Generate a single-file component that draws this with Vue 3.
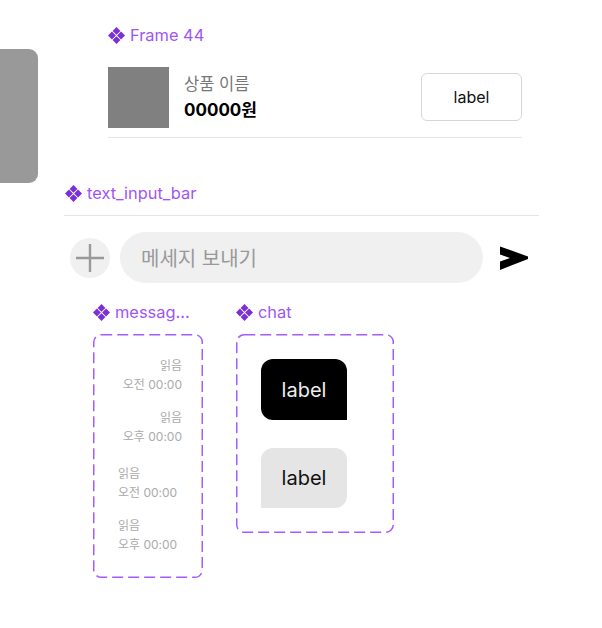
<script setup>
const times = [
  { read: '읽음', time: '오전 00:00', mine: true },
  { read: '읽음', time: '오후 00:00', mine: true },
  { read: '읽음', time: '오전 00:00', mine: false },
  { read: '읽음', time: '오후 00:00', mine: false }
]
const diamonds = ['M7 .5 10 3.5 7 6.5 4 3.5Z', 'M3.5 4 6.5 7 3.5 10 .5 7Z', 'M10.5 4 13.5 7 10.5 10 7.5 7Z', 'M7 7.5 10 10.5 7 13.5 4 10.5Z']
</script>

<template>
  <div class="page">
    <div class="side-tab"></div>

    <section class="frame44">
      <h3 class="comp-title">
        <svg class="comp-icon" viewBox=".5 .5 13 13"><path v-for="d in diamonds" :key="d" :d="d" /></svg>
        Frame 44
      </h3>
      <div class="product">
        <div class="thumb"></div>
        <div class="product-info">
          <span class="product-name">상품 이름</span>
          <strong class="product-price">00000원</strong>
        </div>
        <button class="outline-btn">label</button>
      </div>
    </section>

    <section class="input-section">
      <h3 class="comp-title">
        <svg class="comp-icon" viewBox=".5 .5 13 13"><path v-for="d in diamonds" :key="d" :d="d" /></svg>
        text_input_bar
      </h3>
      <div class="input-bar">
        <button class="plus-btn">
          <svg width="30" height="30" viewBox="0 0 30 30"><path d="M15 1V29M1 15H29" stroke="#999" stroke-width="2.4" fill="none" /></svg>
        </button>
        <div class="pill">메세지 보내기</div>
        <svg class="send" width="30" height="24" viewBox="0 0 30 24"><path d="M1 .5 29 10.5V13L1 24V15.5L11 12 1 8.5Z" fill="#000" /></svg>
      </div>
    </section>

    <section class="variants">
      <div class="variant">
        <h3 class="comp-title">
          <svg class="comp-icon" viewBox=".5 .5 13 13"><path v-for="d in diamonds" :key="d" :d="d" /></svg>
          messag...
        </h3>
        <div class="dash-box times">
          <svg class="dash" width="110" height="244"><rect x=".75" y=".75" width="108.5" height="242.5" rx="7.5" /></svg>
          <div v-for="(t, i) in times" :key="i" class="stamp" :class="{ mine: t.mine }">
            <span>{{ t.read }}</span>
            <span>{{ t.time }}</span>
          </div>
        </div>
      </div>

      <div class="variant">
        <h3 class="comp-title">
          <svg class="comp-icon" viewBox=".5 .5 13 13"><path v-for="d in diamonds" :key="d" :d="d" /></svg>
          chat
        </h3>
        <div class="dash-box chats">
          <svg class="dash" width="158" height="199"><rect x=".75" y=".75" width="156.5" height="197.5" rx="7.5" /></svg>
          <div class="bubble dark">label</div>
          <div class="bubble light">label</div>
        </div>
      </div>
    </section>
  </div>
</template>

<style>
html, body {
  background: #fff;
}
</style>

<style scoped>
.page {
  position: relative;
  width: 602px;
  height: 628px;
  overflow: hidden;
  padding-top: 26px;
  box-sizing: border-box;
  font-family: Inter, "Noto Sans CJK KR", sans-serif;
}
.side-tab {
  position: absolute;
  left: -20px;
  top: 49px;
  width: 58px;
  height: 134px;
  border-radius: 9px;
  background: #999;
}
.comp-title {
  display: flex;
  align-items: center;
  gap: 5px;
  margin: 0;
  height: 19px;
  box-sizing: border-box;
  font-size: 16.4px;
  line-height: 17px;
  font-weight: 400;
  color: #9f55f5;
  white-space: nowrap;
}
.comp-icon {
  width: 17px;
  height: 17px;
  fill: #7b2fd6;
  flex: none;
}
.frame44 {
  width: 414px;
  margin-left: 108px;
}
.product {
  display: flex;
  align-items: center;
  height: 61px;
  margin-top: 22px;
  padding-bottom: 9px;
  border-bottom: 1px solid #e5e5e5;
}
.thumb {
  width: 61px;
  height: 61px;
  background: #808080;
}
.product-info {
  display: flex;
  flex-direction: column;
  gap: 4px;
  margin-left: 15px;
}
.product-name {
  font-size: 16.5px;
  line-height: 20px;
  color: #777;
}
.product-price {
  font-size: 17px;
  line-height: 24px;
  font-weight: 700;
  color: #000;
}
.outline-btn {
  align-self: flex-start;
  width: 101px;
  height: 48px;
  margin: 6px 0 0 auto;
  border: 1.5px solid #d6d6d6;
  border-radius: 6px;
  background: #fff;
  font: 400 16px Inter, sans-serif;
  color: #111;
}
.input-section {
  width: 475px;
  margin: 46px 0 0 64px;
}
.input-section .comp-title {
  margin-left: 1px;
}
.input-bar {
  display: flex;
  align-items: center;
  height: 51px;
  padding: 16px 10px 0 6px;
  margin-top: 12px;
  border-top: 1px solid #e5e5e5;
}
.plus-btn {
  display: flex;
  align-items: center;
  justify-content: center;
  width: 40px;
  height: 40px;
  padding: 0;
  border: 0;
  border-radius: 50%;
  background: #f0f0f0;
  flex: none;
}
.pill {
  display: flex;
  align-items: center;
  width: 364px;
  height: 51px;
  margin-left: 10px;
  padding-left: 21px;
  box-sizing: border-box;
  border-radius: 25.5px;
  background: #f0f0f0;
  font-size: 20px;
  color: #999;
}
.send {
  margin-left: 16px;
  flex: none;
}
.variants {
  display: flex;
  align-items: flex-start;
  gap: 33px;
  margin: 20px 0 0 93px;
}
.variant .comp-title {
  margin-bottom: 12px;
}
.dash-box {
  position: relative;
  box-sizing: border-box;
}
.dash {
  position: absolute;
  left: 0;
  top: 0;
}
.dash rect {
  fill: none;
  stroke: #a55cff;
  stroke-width: 1.5;
  stroke-dasharray: 11 5;
}
.times {
  display: flex;
  flex-direction: column;
  gap: 14px;
  width: 110px;
  height: 244px;
  padding: 22px 25px 0;
}
.stamp {
  display: flex;
  flex-direction: column;
  font-size: 12px;
  line-height: 19px;
  color: #aaa;
}
.stamp.mine {
  align-items: flex-end;
  margin-right: -4px;
}
.stamp:nth-child(4) {
  margin-top: 4px;
}
.chats {
  display: flex;
  flex-direction: column;
  gap: 28px;
  width: 158px;
  height: 199px;
  padding: 25px;
}
.bubble {
  display: flex;
  align-items: center;
  justify-content: center;
  width: 86px;
  flex: none;
  font-size: 20px;
}
.dark {
  height: 61px;
  border-radius: 12px 12px 0 12px;
  background: #000;
  color: #eee;
}
.light {
  height: 60px;
  border-radius: 12px 12px 12px 0;
  background: #e5e5e5;
  color: #111;
}
</style>
